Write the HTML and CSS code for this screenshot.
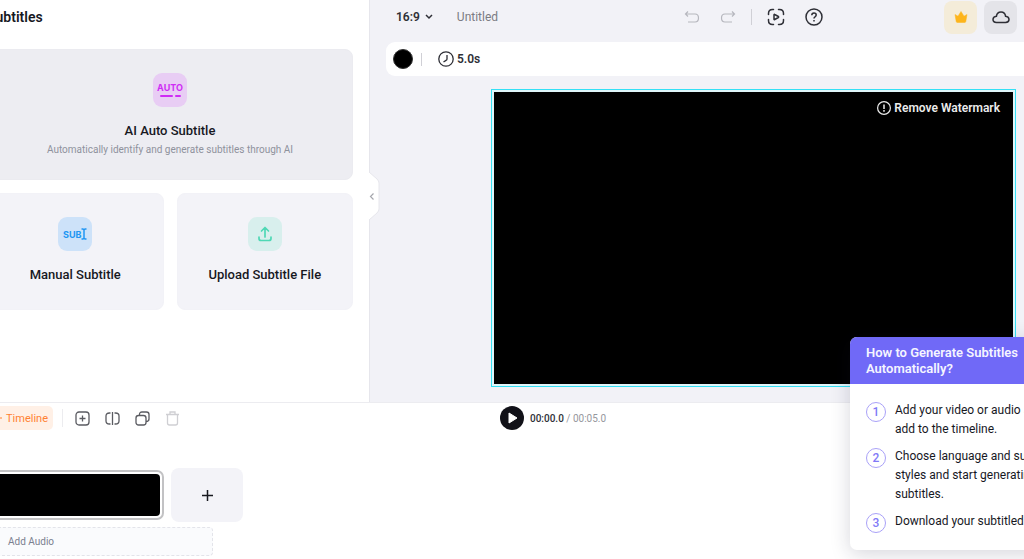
FILE: index.html
```html
<!DOCTYPE html>
<html lang="en">
<head>
<meta charset="utf-8">
<title>Video editor - Subtitles</title>
<link rel="stylesheet" href="styles.css">
</head>
<body>
<div class="app">
  <div class="workspace">
    <aside class="panel">
      <div class="panel-inner">
        <h1 class="panel-title">Subtitles</h1>
        <div class="cards">
          <button class="card card-auto">
            <span class="badge badge-auto"><span class="badge-text">AUTO</span><span class="dashes"><i class="dash-long"></i><i class="dash-short"></i></span></span>
            <span class="card-title">AI Auto Subtitle</span>
            <span class="card-note">Automatically identify and generate subtitles through AI</span>
          </button>
          <button class="card">
            <span class="badge badge-manual"><span class="badge-text">SUB</span><svg width="6" height="12" viewBox="0 0 6 12" fill="none" stroke="currentColor" stroke-width="1.5"><path d="M.5 1H2L3 2 4 1h1.5M3 2v8M.5 11H2l1-1 1 1h1.5"/></svg></span>
            <span class="card-title">Manual Subtitle</span>
          </button>
          <button class="card">
            <span class="badge badge-upload"><svg width="16" height="18" viewBox="0 0 16 18" fill="none" stroke="currentColor" stroke-width="1.7" stroke-linecap="round" stroke-linejoin="round"><path d="M8 12V2.500M4.500 6L8 2.500 11.500 6M2 12v1.500q0 2 2 2h8q2 0 2-2V12"/></svg></span>
            <span class="card-title">Upload Subtitle File</span>
          </button>
        </div>
      </div>
      <button class="handle" aria-label="Collapse panel"><svg width="12" height="54" viewBox="0 0 12 54" fill="none"><path d="M0 0v3l8 7q2 2 2 4v26q0 2-2 4l-8 7v3" fill="#fff" stroke="#e6e6ec"/><path d="M4.500 24.500L1.500 27.500l3 3" stroke="#a5a6ad" stroke-width="1.200"/></svg></button>
    </aside>
    <main class="editor">
      <header class="topbar">
        <button class="ratio">16:9 <svg width="8" height="6" viewBox="0 0 8 6" fill="none" stroke="currentColor" stroke-width="1.500"><path d="M1 1l3 3 3-3"/></svg></button>
        <span class="project">Untitled</span>
        <div class="history">
          <button class="icon-btn muted" aria-label="Undo"><svg width="16" height="14" viewBox="0 0 16 14" fill="none" stroke="currentColor" stroke-width="1.200"><path d="M4 1.500L1.500 4 4 6.500M1.500 4H11q3.500 0 3.500 4T11 12H4"/></svg></button>
          <button class="icon-btn muted" aria-label="Redo"><svg width="16" height="14" viewBox="0 0 16 14" fill="none" stroke="currentColor" stroke-width="1.200"><path d="M12 1.500L14.500 4 12 6.500M14.500 4H5Q1.500 4 1.500 8T5 12h7"/></svg></button>
          <span class="rule"></span>
          <button class="icon-btn" aria-label="Preview"><svg width="18" height="18" viewBox="0 0 18 18" fill="none" stroke="currentColor" stroke-width="1.500" stroke-linecap="round" stroke-linejoin="round"><path d="M1.500 6.500V5.500q0-4 4-4h1M11.500 1.500h1q4 0 4 4v1M16.500 11.500v1q0 4-4 4h-1M6.500 16.500h-1q-4 0-4-4v-1M7 6.800v4.400q0 .7.700.3l3.700-2q.6-.5 0-1l-3.700-2Q7 6.100 7 6.800z"/></svg></button>
          <button class="icon-btn" aria-label="Help"><svg width="18" height="18" viewBox="0 0 18 18" fill="none" stroke="currentColor" stroke-width="1.500"><circle cx="9" cy="9" r="8"/><path d="M6.800 7.300Q6.800 5 9 5t2.200 2Q11.200 8 10 8.800 9 9.400 9 10.600M9 12v1.600"/></svg></button>
        </div>
        <div class="account">
          <button class="square gold" aria-label="Upgrade"><svg width="14" height="12" viewBox="0 0 14 12"><path d="M1 3.500l3 1.700L7 .5l3 4.700 3-1.700-1.200 7q-.2 1-1.200 1H3.400q-1 0-1.200-1z" fill="#fdb51c" stroke="#fdb51c" stroke-width=".5" stroke-linejoin="round"/></svg></button>
          <button class="square gray" aria-label="Cloud"><svg width="18" height="14" viewBox="0 0 18 14" fill="none" stroke="currentColor" stroke-width="1.500"><path d="M4.500 12.500h9q3.500-.2 3.500-3T13.600 6.300Q13 2 9 2T4.400 6.300Q1 6.700 1 9.500t3.500 3z"/></svg></button>
        </div>
      </header>
      <div class="clipbar">
        <button class="swatch" aria-label="Background colour"></button>
        <span class="rule short"></span>
        <button class="duration"><svg width="16" height="16" viewBox="0 0 16 16" fill="none" stroke="currentColor" stroke-width="1.300"><circle cx="8" cy="8" r="7.200"/><path d="M9 4v4q0 1-1 1.400L5.500 11"/></svg>5.0s</button>
      </div>
      <div class="stage">
        <div class="frame"><div class="canvas">
          <button class="watermark"><svg width="14" height="14" viewBox="0 0 14 14" fill="none" stroke="currentColor" stroke-width="1.200"><circle cx="7" cy="7" r="6.400"/><path d="M7 3.500V8M7 9v1.700" stroke-width="1.500"/></svg>Remove Watermark</button>
        </div></div>
      </div>
    </main>
  </div>
  <section class="timeline">
    <div class="tools">
      <div class="tools-left">
        <button class="timeline-btn"><svg width="12" height="12" viewBox="0 0 12 12" fill="none" stroke="currentColor" stroke-width="1.200"><path d="M1 3h8M6 6h6M1 9h8M9 3v6"/></svg>Timeline</button>
        <span class="rule pale"></span>
        <button class="icon-btn" aria-label="Add"><svg width="15" height="15" viewBox="0 0 15 15" fill="none" stroke="currentColor" stroke-width="1.300"><rect x="1" y="1" width="13" height="13" rx="3"/><path d="M7.500 4.500v6M4.500 7.500h6"/></svg></button>
        <button class="icon-btn" aria-label="Split"><svg width="15" height="15" viewBox="0 0 15 15" fill="none" stroke="currentColor" stroke-width="1.300"><path d="M7.500 1v13M5.500 2H4.500Q1 2 1 5v5q0 3 3.500 3h1M9.500 2h1Q14 2 14 5v5q0 3-3.500 3h-1"/></svg></button>
        <button class="icon-btn" aria-label="Duplicate"><svg width="15" height="15" viewBox="0 0 15 15" fill="none" stroke="currentColor" stroke-width="1.300"><rect x="1" y="4.500" width="10" height="9.500" rx="2.500"/><path d="M4.500 4.500V3.500Q4.500 1 7 1h4.500Q14 1 14 3.500V8q0 2.500-3 2.500"/></svg></button>
        <button class="icon-btn faint" aria-label="Delete"><svg width="15" height="15" viewBox="0 0 15 15" fill="none" stroke="currentColor" stroke-width="1.300"><path d="M1 3.500h13M5 3V1h5v2M2.500 3.500V12q0 2 2 2h6q2 0 2-2V3.500"/></svg></button>
      </div>
      <div class="transport">
        <button class="play" aria-label="Play"><svg width="24" height="24" viewBox="0 0 24 24"><circle cx="12" cy="12" r="12" fill="#111118"/><path d="M9 7v10l8-5z" fill="#fff" stroke="#fff" stroke-linejoin="round"/></svg></button>
        <span class="time">00:00.0 <span class="total">/ 00:05.0</span></span>
      </div>
    </div>
    <div class="track">
      <div class="clip"><div class="clip-fill"></div></div>
      <button class="add-clip" aria-label="Add clip"><svg width="11" height="11" viewBox="0 0 11 11" fill="none" stroke="currentColor" stroke-width="1.500"><path d="M5.500 0v11M0 5.500h11"/></svg></button>
    </div>
    <button class="audio">Add Audio</button>
  </section>
  <section class="guide">
    <h2 class="guide-title">How to Generate Subtitles<br>Automatically?</h2>
    <ol class="steps">
      <li class="step"><span class="num">1</span><span>Add your video or audio and<br>add to the timeline.</span></li>
      <li class="step"><span class="num">2</span><span>Choose language and subtitle<br>styles and start generating<br>subtitles.</span></li>
      <li class="step"><span class="num">3</span><span>Download your subtitled video.</span></li>
    </ol>
  </section>
</div>
</body>
</html>
```
FILE: styles.css
```css
* { box-sizing: border-box; }
body {
  margin: 0;
  font-family: Roboto, "Liberation Sans", sans-serif;
  font-size: 12px;
  color: #17181f;
}
button {
  margin: 0;
  padding: 0;
  border: 0;
  background: none;
  font: inherit;
  color: inherit;
}
svg { display: block; flex: none; }

.app {
  position: relative;
  display: flex;
  flex-direction: column;
  min-height: 100vh;
  overflow: hidden;
  background: #fff;
}
.workspace {
  flex: 1;
  display: flex;
  background: #f2f2f7;
}

/* Subtitle panel */
.panel {
  position: relative;
  flex: 0 0 370px;
  border-right: 1px solid #e6e6ec;
  background: #fff;
}
.panel-inner {
  margin-left: -13px;
  padding: 6px 16px 0 0;
}
.panel-title {
  margin: 0;
  font-size: 14px;
  line-height: 22px;
  font-weight: 600;
}
.cards {
  display: grid;
  grid-template-columns: 1fr 1fr;
  gap: 13px;
  margin-top: 21px;
}
.card {
  display: flex;
  flex-direction: column;
  align-items: center;
  padding: 23px 0 25px;
  border: 1px solid #f2f2f7;
  border-radius: 8px;
  background: #f3f3f8;
}
.card-auto {
  grid-column: 1 / -1;
  padding-bottom: 20px;
  border-color: #ebebf0;
  background: #ededf2;
}
.badge {
  display: flex;
  align-items: center;
  justify-content: center;
  width: 34px;
  height: 34px;
  border-radius: 9px;
}
.badge-text {
  font-family: Inter, Roboto, sans-serif;
  font-size: 9px;
  line-height: 9px;
  font-weight: 700;
}
.badge-auto {
  flex-direction: column;
  gap: 3px;
  background: #e8cdf4;
  color: #cf2cf5;
}
.badge-manual { background: #cde2f9; color: #2196f3; }
.badge-upload { background: #d8efed; color: #4fd8b5; }
.dashes { display: flex; gap: 2px; }
.dash-long, .dash-short { width: 13px; height: 2px; border-radius: 1px; background: currentColor; }
.dash-short { width: 6px; }
.card-title {
  margin-top: 15px;
  font-size: 13px;
  line-height: 18px;
  font-weight: 500;
}
.card-note {
  margin-top: 1px;
  font-size: 10px;
  line-height: 18px;
  color: #8f929d;
}
.handle {
  position: absolute;
  top: 169px;
  right: -12px;
}

/* Editor */
.editor {
  flex: 1;
  min-width: 0;
  display: flex;
  flex-direction: column;
}
.topbar {
  display: flex;
  align-items: center;
  height: 34px;
  padding: 0 7px 0 26px;
  color: #2e2f36;
}
.ratio {
  display: flex;
  align-items: center;
  gap: 5px;
  font-weight: 600;
}
.project { margin-left: 24px; color: #7b7c83; }
.history {
  display: flex;
  align-items: center;
  gap: 20px;
  margin-left: auto;
}
.history .rule { margin: 0 -5px; }
.muted { color: #b6b7be; }
.faint { color: #cfcfd3; }
.rule { width: 1px; height: 16px; background: #d0d0d6; }
.short { height: 13px; }
.pale { height: 18px; background: #ececef; }
.account { display: flex; gap: 7px; margin-left: 121px; }
.square {
  display: flex;
  align-items: center;
  justify-content: center;
  width: 33px;
  height: 33px;
  border-radius: 8px;
}
.gold { background: #f4ecd9; }
.gray { background: #e4e4e9; }
.clipbar {
  display: flex;
  align-items: center;
  height: 34px;
  margin: 8px 0 0 16px;
  padding-left: 7px;
  border-radius: 9px 0 0 9px;
  background: #fff;
  color: #2e2f36;
}
.swatch { width: 20px; height: 20px; border: 1px solid #333; border-radius: 50%; background: #000; }
.clipbar .rule { margin: 0 16px 0 8px; }
.duration { display: flex; align-items: center; gap: 3px; font-weight: 600; }
.stage {
  flex: 1;
  display: flex;
  padding: 13px 8px 15px 121px;
}
.frame {
  flex: 1;
  display: flex;
  border: 1px solid #35e0f5;
  padding: 2px;
  background: #e0f6fa;
}
.canvas {
  flex: 1;
  display: flex;
  align-items: flex-start;
  justify-content: flex-end;
  padding: 9px 13px;
  background: #000;
}
.watermark {
  display: flex;
  align-items: center;
  gap: 3px;
  line-height: 14px;
  font-weight: 600;
  color: #ececec;
}

/* Timeline */
.timeline {
  border-top: 1px solid #ececf0;
  padding-bottom: 3px;
}
.tools {
  display: grid;
  grid-template-columns: 1fr 1fr;
  align-items: center;
  height: 30px;
}
.tools-left {
  display: flex;
  align-items: center;
  gap: 15px;
  margin-left: -19px;
  color: #5a5b61;
}
.timeline-btn {
  display: flex;
  align-items: center;
  gap: 4px;
  height: 24px;
  margin-right: -6px;
  padding: 0 5px 0 9px;
  border-radius: 5px;
  background: #fff0e6;
  font-size: 11px;
  color: #ff8133;
}
.tools-left .pale { margin-right: -3px; }
.transport {
  display: flex;
  align-items: center;
  gap: 6px;
  margin-left: -12px;
}
.time { font-size: 10px; font-weight: 500; color: #2e2f36; }
.total { font-weight: 400; color: #96979d; }
.track {
  display: flex;
  align-items: center;
  gap: 7px;
  margin: 35px 0 5px;
}
.clip {
  width: 190px;
  height: 50px;
  margin-left: -26px;
  padding: 2px;
  border: 2px solid #c2c2c4;
  border-radius: 7px;
}
.clip-fill { height: 100%; border-radius: 4px; background: #000; }
.add-clip {
  display: flex;
  align-items: center;
  justify-content: center;
  width: 72px;
  height: 54px;
  border-radius: 8px;
  background: #f3f3f8;
}
.audio {
  width: 239px;
  height: 29px;
  margin-left: -26px;
  padding-left: 33px;
  border: 1px dashed #e3e4ea;
  border-radius: 4px;
  background: #fafbfd;
  font-size: 10px;
  text-align: left;
  color: #7b8090;
}

/* Help popup */
.guide {
  position: absolute;
  right: -66px;
  bottom: 9px;
  width: 240px;
  border-radius: 7px;
  overflow: hidden;
  background: #fff;
  box-shadow: 0 4px 20px rgba(30, 30, 60, 0.18);
}
.guide-title {
  margin: 0;
  padding: 8px 16px 7px;
  background: #7069f7;
  font-size: 13px;
  line-height: 16px;
  font-weight: 600;
  color: #f5f5ff;
}
.steps {
  display: flex;
  flex-direction: column;
  gap: 8px;
  margin: 0;
  padding: 17px 0 17px 16px;
  list-style: none;
}
.step {
  display: flex;
  gap: 9px;
  line-height: 19px;
  white-space: nowrap;
}
.num {
  flex: none;
  width: 20px;
  height: 20px;
  margin-top: 1px;
  border: 1px solid #a9a1f8;
  border-radius: 50%;
  line-height: 18px;
  font-weight: 500;
  text-align: center;
  color: #8179f7;
}
```
